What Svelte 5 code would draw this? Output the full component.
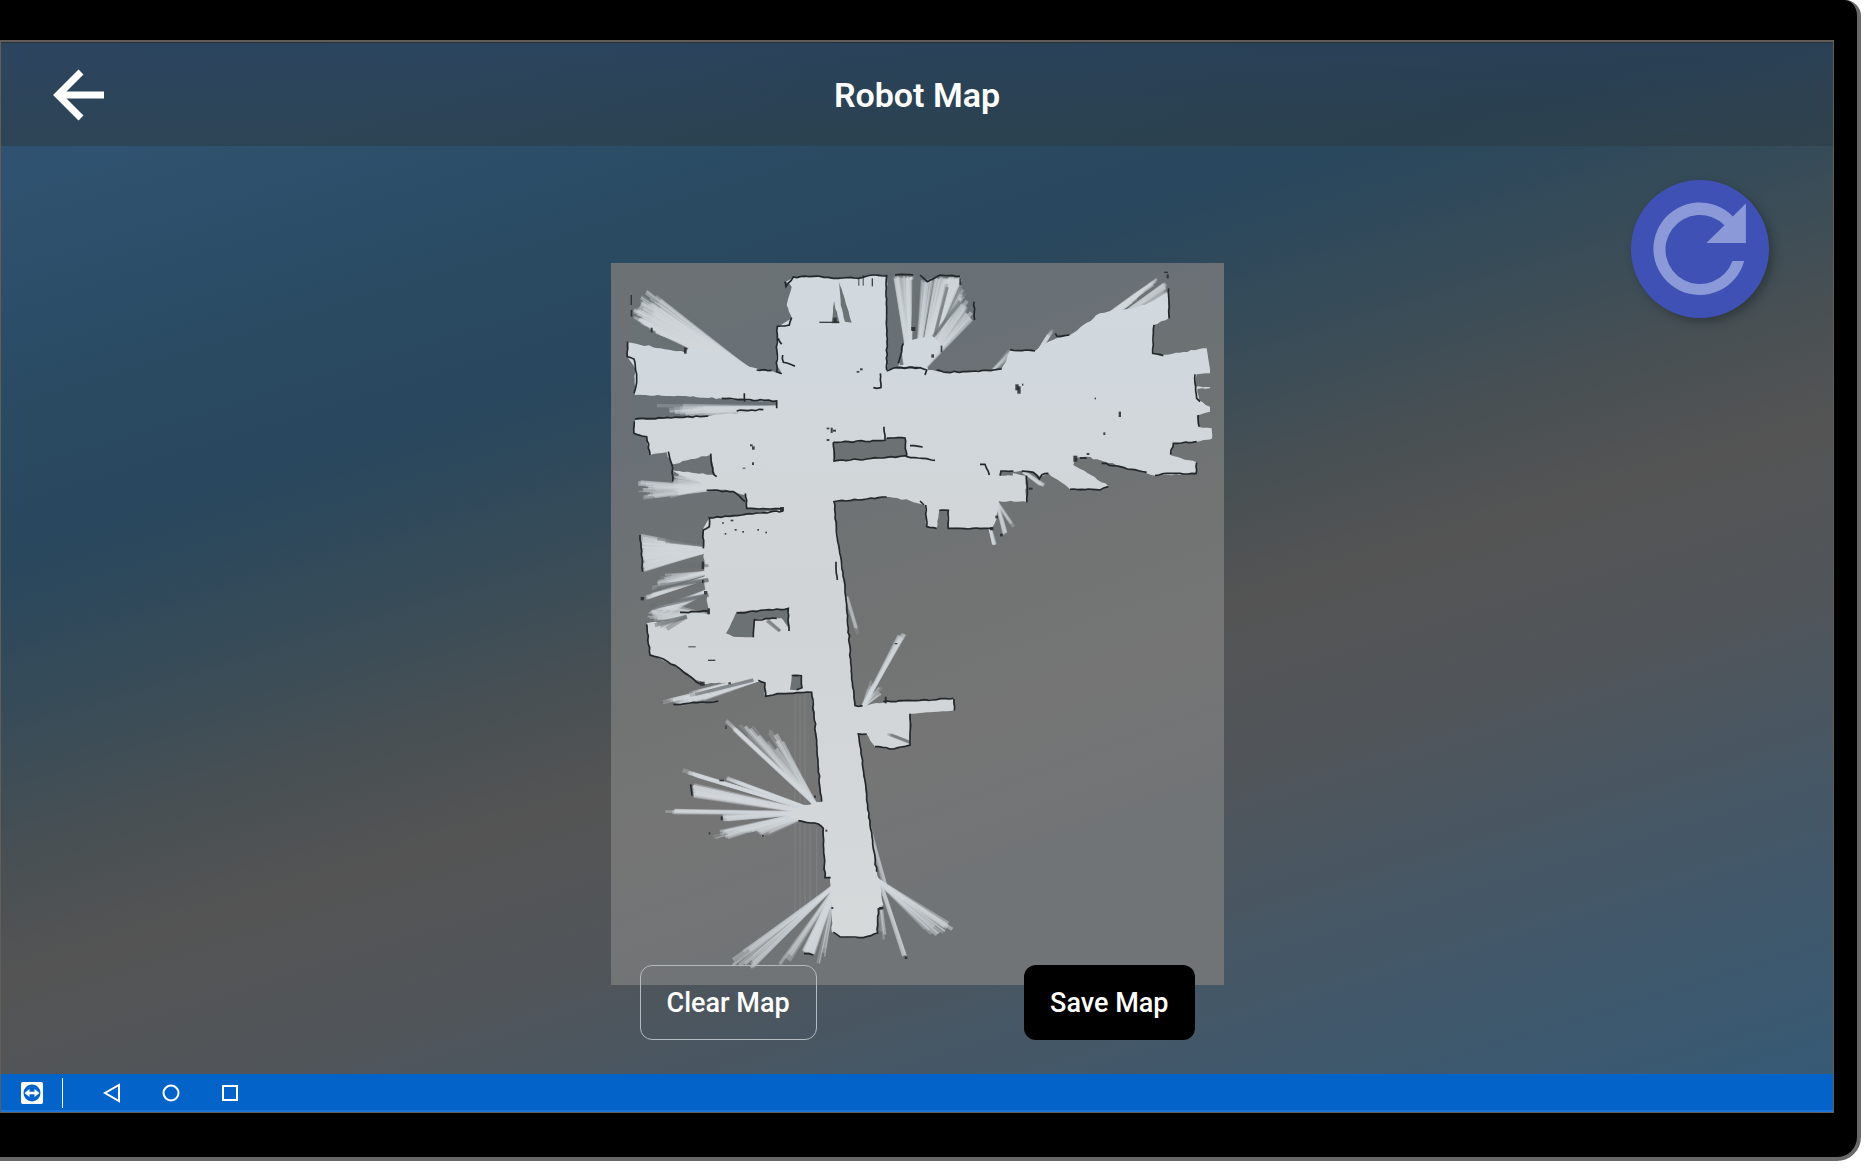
<script>
  // Small seeded generator so the scan noise is identical on every render.
  function seeded(seed) {
    let s = seed;
    return () => {
      s = (s * 16807) % 2147483647;
      return s / 2147483647;
    };
  }

  // Roughens a polyline, giving it the broken edge of a lidar scan.
  function rough(text, seed, amount = 3, close = false) {
    const rand = seeded(seed);
    const pts = text.trim().split(/\s+/).map((p) => p.split(',').map(Number));
    if (close) pts.push(pts[0]);
    let d = `M${pts[0][0]} ${pts[0][1]}`;
    for (let i = 1; i < pts.length; i++) {
      const [ax, ay] = pts[i - 1];
      const [bx, by] = pts[i];
      const n = Math.max(1, Math.round(Math.hypot(bx - ax, by - ay) / 12));
      for (let k = 1; k <= n; k++) {
        const j = k === n ? 0 : amount;
        const x = ax + ((bx - ax) * k) / n + (rand() - 0.5) * 2 * j;
        const y = ay + ((by - ay) * k) / n + (rand() - 0.5) * 2 * j;
        d += `L${Math.round(x)} ${Math.round(y)}`;
      }
    }
    return d + (close ? 'Z' : '');
  }

  // A fan of beams from one origin, swept between two end points. Each beam
  // gets its own strength, and they add up to solid floor near the origin.
  function fan([ox, oy, ax, ay, bx, by, count, min], seed) {
    const rand = seeded(seed);
    for (let i = 0; i < 6; i++) rand();
    const out = [];
    for (let i = 0; i < count; i++) {
      const t = (i + rand() * 0.8) / count;
      const len = min + (1 - min) * rand();
      const x = ox + (ax + (bx - ax) * t - ox) * len;
      const y = oy + (ay + (by - ay) * t - oy) * len;
      const dist = Math.hypot(x - ox, y - oy) || 1;
      const w = 2 + rand() * 5;
      const nx = (-(y - oy) / dist) * w;
      const ny = ((x - ox) / dist) * w;
      const r = (v) => Math.round(v);
      out.push({
        d: `M${r(ox - nx)} ${r(oy - ny)}L${r(x - nx)} ${r(y - ny)}L${r(x + nx)} ${r(y + ny)}L${r(ox + nx)} ${r(oy + ny)}Z`,
        opacity: Math.round((0.12 + rand() * 0.42) * 100) / 100
      });
    }
    return out;
  }

  const floor = `580,68 660,64 700,72 740,68 775,70 815,62 860,64 860,345 890,340 900,318 910,265 925,255 1000,245
    1022,270 995,305 975,330 985,345 1030,352 1090,350 1160,346 1205,342 1220,315 1230,285 1305,288 1325,270 1370,250
    1410,240 1500,175 1600,160 1660,138 1705,110 1706,190 1660,210 1660,295 1680,302 1820,280 1830,355 1790,358 1785,395
    1830,397 1830,400 1792,402 1797,435 1830,455 1830,470 1790,482 1797,516 1835,520 1835,552 1780,562 1720,565 1710,600
    1790,622 1788,655 1665,662 1640,655 1560,632 1460,605 1425,610 1420,630 1525,693 1510,703 1410,703 1345,655 1320,665
    1300,652 1260,648 1200,648 1275,662 1280,740 1195,738 1190,790 1175,820 1045,820 1043,765 1018,765 1010,820 980,815
    975,752 930,737 880,728 860,726 800,732 702,740 712,850 722,905 735,1000 745,1120 755,1260 765,1352 790,1352 855,1342
    960,1336 1060,1332 1062,1366 930,1376 930,1470 880,1482 825,1475 800,1437 775,1437 785,1505 800,1625 810,1710
    830,1850 836,1870 850,1950 835,1960 833,2034 790,2048 720,2046 695,2030 695,1960 690,1870 675,1865 670,1720
    655,1705 595,1697 560,1680 600,1655 640,1645 665,1640 660,1600 650,1460 635,1312 545,1316 495,1325 495,1282 475,1275
    400,1283 310,1287 230,1235 150,1200 140,1105 240,1090 325,1085 325,1060 315,1000 310,880 310,820 328,790 400,785
    550,762 440,760 435,720 400,708 330,700 300,680 240,660 215,645 345,660 330,600 215,628 200,592 150,600 140,545 100,535
    105,496 330,482 490,465 530,452 530,440 370,432 280,424 105,420 105,340 85,310 85,262 255,292 275,270 390,302 440,335
    480,345 545,355 530,330 532,215 575,190 560,150 575,95 558,80`;

  const holes = [
    '700,562 855,556 860,548 915,549 920,605 800,612 702,618',
    '410,1070 565,1062 566,1120 545,1090 465,1092 460,1147 400,1145 378,1135',
    '575,1265 590,1260 606,1268 606,1295 592,1306 570,1304',
    '702,138 718,205 695,205',
    '718,80 755,203 735,200 722,150',
    '1202,648 1240,648 1238,662 1200,662',
    '235,927 310,925 310,938 240,934'
  ];

  const walls = [
    '555,80 558,95 580,66 660,64 700,70 740,68 775,70 815,60 860,62 860,345',
    '575,188 568,210 532,214 530,350 545,356',
    '470,345 515,346', '548,300 550,322 585,334', '535,250 545,268',
    '885,60 940,60', '960,60 982,80 1020,60 1080,64', '1122,140 1124,195',
    '860,348 890,338 955,338', '910,265 895,325', '890,338 960,338 980,345 975,360',
    '1010,345 1040,352 1090,350 1160,346 1205,342', '1230,284 1305,288',
    '1366,235 1370,243 1408,240', '1706,100 1708,190', '1662,210 1658,295 1690,302',
    '1785,358 1787,395 1790,430 1800,440', '1795,480 1797,515', '1790,560 1720,565 1712,598',
    '1790,622 1788,656 1690,656 1665,662', '1640,652 1560,635 1505,625',
    '1525,695 1500,705 1410,703', '1345,655 1325,660 1318,672 1300,652 1265,648',
    '1280,662 1281,742', '1240,648 1203,648 1200,662', '1140,628 1155,628 1168,660',
    '1178,820 1045,820 1045,766 1018,766', '1010,820 980,815 977,750',
    '860,726 800,732 702,740 712,850 722,905 735,1000 745,1120 755,1260 765,1352 785,1352',
    '708,920 712,975', '960,738 972,750', '700,562 855,556 852,515', '700,562 702,618 800,612 920,602',
    '860,550 915,549 920,605 1005,616', '930,572 968,576', '820,398 843,398 841,355',
    '83,260 82,305 102,312 110,370 102,415', '365,430 530,438 530,460', '433,415 434,440',
    '105,492 325,483', '410,468 490,464', '103,500 102,535 140,545 150,600', '205,590 218,640 218,680',
    '332,596 338,650 350,665', '320,706 400,710 435,740', '436,715 440,760 550,762',
    '550,768 400,782 328,788 328,815 310,825 310,880', '120,840 124,900 128,950', '240,1072 325,1068',
    '410,1074 565,1060 567,1128', '460,1147 463,1094 530,1090', '140,1108 150,1200 190,1212 235,1238 300,1287',
    '220,1348 355,1338', '475,1276 495,1284 497,1324 545,1316 635,1312 650,1455 660,1600 665,1640',
    '595,1697 655,1707 670,1720 675,1868 692,1868', '575,1262 604,1262 606,1298 590,1304',
    '850,1340 960,1336 1060,1330', '1062,1332 1063,1366', '930,1376 930,1470 880,1482 825,1475',
    '800,1437 775,1437 785,1505 800,1625 810,1710 830,1850', '850,1958 835,1962 833,2034 790,2048 720,2046 700,2032',
    '272,1588 276,1622', '612,2096 640,2100'
  ];

  // origin x/y, first end x/y, last end x/y, beam count, shortest beam
  const beams = [
    [450, 345, 92, 180, 135, 95, 34, 0.82], [300, 290, 92, 180, 160, 225, 14, 0.9],
    [390, 310, 92, 180, 175, 235, 24, 0.9], [450, 345, 95, 175, 110, 130, 16, 0.9],
    [530, 458, 150, 450, 180, 480, 18, 0.5], [530, 462, 250, 480, 400, 468, 8, 0.8],
    [930, 345, 880, 62, 940, 62, 34, 0.97], [950, 345, 965, 75, 1000, 66, 14, 0.95],
    [960, 340, 1005, 66, 1085, 66, 40, 0.97], [965, 345, 1085, 85, 1122, 190, 30, 0.9],
    [970, 330, 1040, 66, 1085, 66, 20, 0.97],
    [1380, 285, 1585, 150, 1700, 50, 40, 0.75], [1400, 300, 1700, 80, 1706, 190, 40, 0.96],
    [1180, 345, 1230, 285, 1240, 300, 6, 0.9], [1310, 300, 1345, 240, 1368, 210, 8, 0.8],
    [360, 700, 105, 680, 110, 735, 20, 0.75], [350, 690, 215, 650, 210, 730, 24, 0.8],
    [340, 885, 118, 840, 128, 950, 50, 0.94], [340, 880, 122, 860, 128, 950, 40, 0.96],
    [330, 965, 128, 1035, 150, 1020, 12, 0.9],
    [330, 1005, 135, 1075, 190, 1085, 20, 0.75], [330, 950, 180, 960, 150, 1005, 14, 0.75],
    [340, 1085, 135, 1095, 170, 1040, 22, 0.8], [500, 1265, 160, 1345, 270, 1348, 34, 0.72],
    [470, 1265, 250, 1320, 330, 1310, 16, 0.8],
    [790, 1355, 903, 1130, 918, 1136, 14, 0.9], [790, 1355, 810, 1265, 860, 1310, 12, 0.6],
    [740, 1025, 770, 1125, 778, 1150, 4, 0.8],
    [660, 1660, 376, 1395, 400, 1420, 12, 0.9], [650, 1655, 400, 1400, 530, 1420, 16, 0.7],
    [650, 1670, 245, 1545, 280, 1560, 14, 0.92], [650, 1675, 275, 1590, 278, 1622, 26, 0.97],
    [650, 1670, 375, 1568, 420, 1585, 14, 0.9], [650, 1675, 195, 1663, 195, 1674, 8, 0.9],
    [650, 1670, 365, 1682, 370, 1698, 14, 0.95], [650, 1665, 325, 1735, 350, 1760, 16, 0.85],
    [650, 1670, 390, 1730, 500, 1742, 18, 0.85],
    [700, 1895, 380, 2120, 430, 2170, 12, 0.8], [705, 1900, 530, 2140, 560, 2130, 5, 0.8],
    [705, 1900, 608, 2090, 640, 2100, 24, 0.97], [705, 1900, 650, 2140, 675, 2110, 5, 0.8],
    [825, 1870, 1080, 2025, 1000, 2050, 16, 0.84], [840, 1880, 912, 2105, 922, 2108, 4, 0.96],
    [835, 1890, 845, 2060, 860, 2050, 3, 0.8], [800, 1690, 855, 1895, 870, 1925, 4, 0.85],
    [1165, 800, 1178, 870, 1186, 870, 7, 0.95], [1190, 740, 1210, 842, 1222, 835, 8, 0.95],
    [1190, 740, 1235, 810, 1245, 820, 4, 0.8], [1270, 650, 1320, 690, 1335, 692, 8, 0.95]
  ];

  // Darker, unscanned streaks that cross the floor.
  const shadows = [
    [255, 286, 155, 240, 170, 256, 8, 0.9],
    [940, 225, 936, 70, 950, 70, 10, 0.96], [905, 330, 864, 90, 876, 90, 8, 0.9],
    [1005, 240, 1040, 80, 1048, 84, 4, 0.9], [1000, 245, 1080, 130, 1115, 110, 6, 0.8],
    [325, 932, 225, 925, 225, 934, 4, 0.9], [325, 975, 140, 1010, 160, 990, 6, 0.85],
    [325, 1020, 140, 1050, 150, 1062, 5, 0.85], [460, 1275, 240, 1328, 330, 1310, 4, 0.85],
    [930, 1462, 860, 1436, 880, 1440, 6, 0.85], [540, 1128, 495, 1094, 505, 1094, 5, 0.9],
    [260, 1085, 150, 1108, 200, 1125, 6, 0.8], [310, 870, 200, 860, 160, 850, 4, 0.8]
  ];

  // x, y, width, height of isolated obstacle returns
  const specks = [
    [252, 278, 8, 18], [152, 218, 6, 14], [92, 120, 4, 30], [92, 165, 5, 20], [658, 200, 60, 4],
    [700, 188, 10, 14], [775, 72, 3, 20], [788, 60, 3, 32], [815, 70, 4, 24], [934, 216, 12, 12],
    [1246, 388, 10, 18], [1252, 394, 10, 22], [1266, 386, 4, 6], [1556, 470, 7, 16], [1484, 428, 4, 5],
    [1510, 532, 6, 8], [1420, 602, 12, 18], [1440, 606, 20, 6], [1460, 594, 8, 6], [1022, 272, 5, 20],
    [994, 298, 8, 10], [1078, 70, 6, 20], [1692, 50, 12, 4], [1700, 58, 6, 12],
    [770, 348, 8, 5], [780, 340, 8, 6], [680, 518, 8, 5], [692, 518, 6, 16], [698, 524, 10, 6], [680, 552, 8, 6],
    [450, 568, 8, 6], [456, 574, 8, 10], [456, 622, 6, 8], [428, 638, 8, 3],
    [366, 802, 6, 4], [392, 794, 8, 5], [374, 834, 5, 5], [404, 822, 6, 5], [427, 828, 5, 5], [472, 822, 5, 5],
    [496, 830, 5, 5], [305, 920, 8, 22], [312, 1008, 10, 10], [122, 1026, 10, 10], [306, 974, 5, 10],
    [322, 1060, 8, 18], [324, 1214, 22, 4], [265, 1174, 22, 3], [300, 1280, 14, 12], [385, 1282, 8, 6],
    [540, 756, 12, 12], [1286, 698, 12, 6], [1186, 782, 8, 8], [1170, 816, 10, 10], [376, 1412, 4, 10],
    [358, 1574, 14, 5], [362, 1684, 6, 12], [326, 1732, 5, 6], [642, 1622, 6, 6], [676, 1724, 6, 6],
    [694, 1956, 6, 6], [838, 1956, 10, 8], [914, 2104, 8, 8], [486, 1740, 5, 5], [884, 1164, 8, 4],
    [854, 1325, 6, 20], [780, 1350, 8, 5], [1200, 836, 8, 8]
  ];
</script>

<div class="device">
  <div class="screen">
    <div class="app">
      <header>
        <button class="back" aria-label="Back">
          <svg viewBox="0 0 52 52" aria-hidden="true">
            <path d="M28 3 5 26l23 23M5 26h46" fill="none" stroke="#fff" stroke-width="7" />
          </svg>
        </button>
        <h1>Robot Map</h1>
      </header>

      <main>
        <section class="editor">
          <svg class="map" viewBox="33 24 1839 2166" role="img" aria-label="Floor map scanned by the robot">
            <defs>
              <linearGradient id="unknown" x1="0" y1="0" x2="0.3" y2="1">
                <stop offset="0" stop-color="#6c7274" />
                <stop offset="0.22" stop-color="#697076" />
                <stop offset="0.5" stop-color="#707373" />
                <stop offset="0.75" stop-color="#757575" />
                <stop offset="1" stop-color="#707476" />
              </linearGradient>
              <linearGradient id="free" x1="0" y1="0" x2="0" y2="1">
                <stop offset="0" stop-color="#d1d9df" />
                <stop offset="0.5" stop-color="#d1d4d6" />
                <stop offset="1" stop-color="#d5d9da" />
              </linearGradient>
            </defs>
            <rect x="33" y="24" width="1839" height="2166" fill="url(#unknown)" />
            <path class="trail" d="M585 1320V2020M600 1320V2000M615 1320V1980M630 1700V1950M650 1720V1930" />
            {#each beams as beam, i}
              {#each fan(beam, 101 + i * 3701) as { d, opacity }}
                <path class="beam" {d} {opacity} />
              {/each}
            {/each}
            <path d={rough(floor, 77, 2, true)} fill="url(#free)" />
            {#each holes as hole, i}
              <path class="hole" d={rough(hole, 500 + i, 1, true)} />
            {/each}
            {#each shadows as shadow, i}
              {#each fan(shadow, 900 + i * 1301) as { d, opacity }}
                <path class="hole" {d} {opacity} />
              {/each}
            {/each}
            {#each walls as wall, i}
              <path class="wall" d={rough(wall, 31 + i * 1101, 2)} />
            {/each}
            {#each specks as [x, y, width, height]}
              <rect class="speck" {x} {y} {width} {height} />
            {/each}
          </svg>
          <div class="actions">
            <button class="clear">Clear Map</button>
            <button class="save">Save Map</button>
          </div>
        </section>

        <button class="refresh" aria-label="Refresh map">
          <svg viewBox="95 120 412 412" aria-hidden="true">
            <path d="M433 362A138 138 0 1 1 399 229L438 190V308H320L374 255A103 103 0 1 0 398 362Z" fill="#8c99d8" />
          </svg>
        </button>
      </main>
    </div>

    <nav aria-label="System">
      <button class="remote" aria-label="Remote control">
        <svg viewBox="0 0 22 22" aria-hidden="true">
          <rect width="22" height="22" rx="2" fill="#fff" />
          <circle cx="11" cy="11" r="8.5" fill="#0463c8" />
          <path d="M3.5 11 8.5 7v2.700h5V7l5 4-5 4v-2.700h-5V15z" fill="#fff" />
        </svg>
      </button>
      <span class="divider"></span>
      <div class="keys">
        <button aria-label="System back">
          <svg viewBox="0 0 20 20" aria-hidden="true"><path d="M17 2v16L3 10z" /></svg>
        </button>
        <button aria-label="Home">
          <svg viewBox="0 0 20 20" aria-hidden="true"><circle cx="10" cy="10" r="7.500" /></svg>
        </button>
        <button aria-label="Recent apps">
          <svg viewBox="0 0 20 20" aria-hidden="true"><path d="M3 3h14v14H3z" /></svg>
        </button>
      </div>
    </nav>
  </div>
</div>

<style>
  :global(body) {
    background: #fff;
  }

  .device {
    box-sizing: border-box;
    display: flex;
    min-height: calc(100vh - 9px);
    margin-right: 4px;
    padding: 40px 23px 44px 0;
    border: solid #686868;
    border-width: 0 4px 4px 0;
    border-radius: 0 16px 24px 0;
    background: #000;
    font-family: Roboto, sans-serif;
    color: #fff;
  }

  .screen {
    flex: 1;
    display: flex;
    flex-direction: column;
    border: 1px solid #625d59;
    border-top-width: 2px;
  }

  .app {
    flex: 1;
    display: flex;
    flex-direction: column;
    background: linear-gradient(
      163deg,
      #305170 0%,
      #2f5270 9%,
      #2a4b63 22%,
      #29475d 33%,
      #384c58 43%,
      #495053 52%,
      #545454 59%,
      #50555a 70%,
      #455766 82%,
      #375a75 100%
    );
  }

  button {
    padding: 0;
    border: 0;
    background: none;
    font: inherit;
    color: inherit;
    cursor: pointer;
  }

  svg {
    display: block;
  }

  header {
    display: grid;
    grid-template-columns: 1fr auto 1fr;
    align-items: center;
    height: 104px;
    border-top: 1px solid #26303a;
    box-sizing: border-box;
    background: linear-gradient(rgba(40, 56, 78, 0.5), rgba(44, 60, 68, 0.6));
  }

  .back {
    width: 52px;
    margin-left: 52px;
  }

  h1 {
    margin: 0;
    font-size: 34px;
    line-height: 40px;
    font-weight: 600;
  }

  main {
    flex: 1;
    display: grid;
    grid-template-columns: 1fr minmax(0, 613px) 1fr;
    align-items: start;
  }

  .editor {
    grid-column: 2;
    padding: 117px 0 33px;
  }

  .map {
    width: 100%;
  }

  .trail {
    fill: none;
    stroke: #858889;
    stroke-width: 4;
    opacity: 0.5;
  }

  .beam {
    fill: #d2d8dc;
  }

  .hole {
    fill: #6c7274;
  }

  .wall {
    fill: none;
    stroke: #22272a;
    stroke-width: 5;
  }

  .speck {
    fill: #24282b;
    opacity: 0.85;
  }

  .actions {
    position: relative;
    display: flex;
    justify-content: space-between;
    margin-top: -20px;
    padding: 0 29px;
  }

  .actions button {
    height: 75px;
    padding: 0 26px;
    border-radius: 12px;
    font-size: 27px;
    font-weight: 500;
  }

  .actions .clear {
    border: 1px solid #b4bbc0;
  }

  .actions .save {
    background: #000;
  }

  .refresh {
    justify-self: end;
    width: 138px;
    height: 138px;
    margin: 34px 64px 0 0;
    border-radius: 50%;
    background: #3f51b5;
    box-shadow: 4px 4px 8px rgba(30, 40, 40, 0.5);
  }

  nav {
    display: flex;
    align-items: center;
    height: 38px;
    padding-left: 20px;
    background: #0463c8;
    box-shadow: inset 0 -2px #1a75d8;
  }

  .remote {
    width: 22px;
  }

  .divider {
    width: 1px;
    height: 30px;
    margin: 0 39px 0 19px;
    background: #fff;
  }

  .keys {
    display: flex;
    gap: 39px;
  }

  .keys button {
    width: 20px;
  }

  .keys svg {
    fill: none;
    stroke: #fff;
    stroke-width: 2;
  }
</style>
